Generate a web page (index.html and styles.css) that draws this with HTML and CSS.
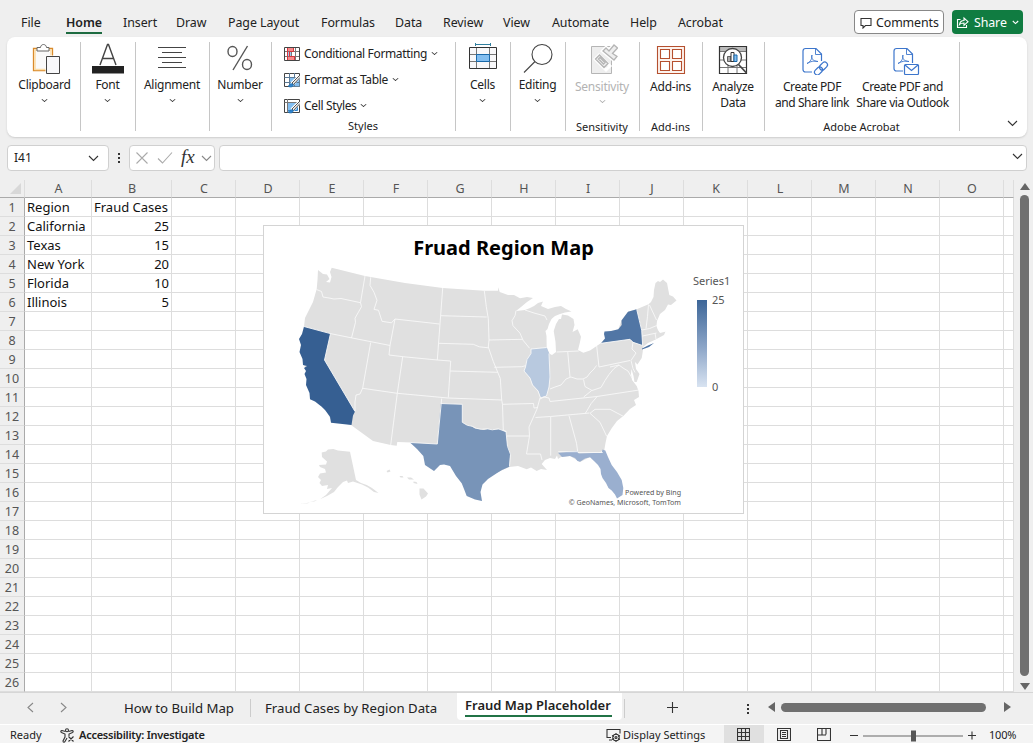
FILE: index.html
```html
<!DOCTYPE html>
<html lang="en">
<head>
<meta charset="utf-8">
<title>Fraud Map Placeholder</title>
<link rel="stylesheet" href="styles.css">
</head>
<body>
<div class="app">
  <header class="menubar">
    <nav class="tabs">
      <span>File</span><span><b class="tab-active">Home</b></span><span>Insert</span><span>Draw</span><span>Page Layout</span><span>Formulas</span><span>Data</span><span>Review</span><span>View</span><span>Automate</span><span>Help</span><span>Acrobat</span>
    </nav>
    <div class="comments">
      <svg width="12" height="12" viewBox="0 0 12 12" class="ln"><path d="M1 1.500h10v7H5.500L3 11V8.500H1z"/></svg>
      <span>Comments</span>
    </div>
    <div class="share">
      <svg width="13" height="13" viewBox="0 0 13 13" class="ln"><path d="M4.500 3.500H1.500v8h9V9M3.500 8.500c.5-3 2-4 4.500-4V2l4 3.700-4 3.600V7C6 7 4.500 7.300 3.500 8.500z"/></svg>
      <span>Share</span>
      <svg width="7" height="5" viewBox="0 0 7 5" class="ln"><path d="M.8 1l2.700 2.600L6.200 1"/></svg>
    </div>
  </header>

  <section class="ribbon">
    <div class="group w74 first">
      <svg class="icon" width="32" height="32" viewBox="0 0 32 32"><path d="M4.500 5.500h19v22h-19z" fill="#fff" stroke="#d98a2b" stroke-width="1.300"/><path d="M6 7h16v19.500H6z" fill="#fafafa" stroke="#fbdca6" stroke-width="1.500"/><path d="M8 8V4.500h3.500c.3-4 5.700-4 6 0H20V8z" fill="#fff" stroke="#666"/><path d="M16.500 12.500H31v18H16.500z" fill="#fff"/><path d="M17.500 13.500h13v17h-13z" fill="#f8f8fa" stroke="#444"/></svg>
      <span class="label">Clipboard</span><i class="chev"></i>
    </div>
    <div class="group w55">
      <svg class="icon" width="32" height="32" viewBox="0 0 32 32"><path d="M8 22L15.500 1.500h1L24 22M10.700 15.500h10.600" fill="none" stroke="#444" stroke-width="1.400"/><path d="M0 23h32v7.500H0z" fill="#222"/></svg>
      <span class="label">Font</span><i class="chev"></i>
    </div>
    <div class="group w74">
      <svg class="icon" width="32" height="32" viewBox="0 0 32 32"><path d="M2 4.500h28M6 9.500h20M2 14.500h28M6 19.500h20M2 24.500h28" stroke="#444"/></svg>
      <span class="label">Alignment</span><i class="chev"></i>
    </div>
    <div class="group w62">
      <svg class="icon" width="32" height="32" viewBox="0 0 32 32" fill="none" stroke="#555" stroke-width="1.400"><ellipse cx="8.500" cy="8.500" rx="4.500" ry="5"/><ellipse cx="23" cy="21.500" rx="4.500" ry="5"/><path d="M23.500 3L9 27"/></svg>
      <span class="label">Number</span><i class="chev"></i>
    </div>
    <div class="group w184 styles">
      <div class="cmds">
        <div class="cmd"><svg width="16" height="16" viewBox="0 0 16 16"><path d="M.5 1.500h15v13H.5z" fill="#fff"/><path d="M3 1.500h7v4H3zM3 10.500h8v4H3z" fill="#f58b8b"/><path d="M3 6h4v4H3z" fill="#9ec8f0"/><path d="M.5 5.500h15M.5 10.500h15M3.500 1v13.500M11.500 1v13.500M7.500 6v4" stroke="#777"/><path d="M3.500 1.500h6v4h-4v5h5v4h-7z" fill="none" stroke="#d9363e"/><path d="M.5 1.500h15v13H.5z" fill="none" stroke="#444"/></svg><span>Conditional Formatting</span><i class="chev"></i></div>
        <div class="cmd"><svg width="16" height="16" viewBox="0 0 16 16"><path d="M.5 1.500h15v13H.5z" fill="#fff" stroke="#444"/><path d="M5.500 5.500h10v9h-10z" fill="#83bef0"/><path d="M.5 5.500h15M.5 10.500h15M5.500 1v13.500M10.500 1v13.500" stroke="#5b7a96"/><path d="M15.500 4.500L8 12" stroke="#fff" stroke-width="4"/><path d="M15.500 3.500L8 11l1.500 1.500 6.500-7" fill="#eee" stroke="#444" stroke-width=".9"/><path d="M9 12c-3-1-3 2-5 2 2 2 6 1 5-2z" fill="#3185d0" stroke="#1969aa" stroke-width=".6"/></svg><span>Format as Table</span><i class="chev"></i></div>
        <div class="cmd"><svg width="16" height="16" viewBox="0 0 16 16"><path d="M.5 1.500h15v13H.5z" fill="#fff" stroke="#444"/><path d="M3.500 4.500h10v8h-10z" fill="#83bef0" stroke="#3185d0"/><path d="M.5 4.500h15M3.500 1v13.500" stroke="#777"/><path d="M15.500 4.500L8 12" stroke="#fff" stroke-width="4"/><path d="M15.500 3.500L8 11l1.500 1.500 6.500-7" fill="#eee" stroke="#444" stroke-width=".9"/><path d="M9 12c-3-1-3 2-5 2 2 2 6 1 5-2z" fill="#3185d0" stroke="#1969aa" stroke-width=".6"/></svg><span>Cell Styles</span><i class="chev"></i></div>
      </div>
      <span class="caption">Styles</span>
    </div>
    <div class="group w55">
      <svg class="icon" width="32" height="32" viewBox="0 0 32 32"><path d="M8.500 1.500h15M8.500 0v3M23.500 0v3" stroke="#2f7f9f"/><path d="M2.500 4.500h27v21h-27z" fill="#f8f8fa"/><path d="M9.500 11.500h13v7h-13z" fill="#83bef0"/><path d="M2.500 11.500h27M2.500 18.500h27M9.500 4.500v21M22.500 4.500v21" stroke="#777"/><path d="M9.500 11.500h13v7h-13z" fill="none" stroke="#1969aa"/><path d="M2.500 4.500h27v21h-27z" fill="none" stroke="#333"/></svg>
      <span class="label">Cells</span><i class="chev"></i>
    </div>
    <div class="group w55">
      <svg class="icon" width="32" height="32" viewBox="0 0 32 32" fill="none" stroke="#444" stroke-width="1.100"><circle cx="20" cy="11.500" r="10"/><path d="M13 18.500L2 29.500"/></svg>
      <span class="label">Editing</span><i class="chev"></i>
    </div>
    <div class="group w74 low muted">
      <svg class="icon" width="32" height="32" viewBox="0 0 32 32" fill="#eee" stroke="#b5b5b5"><path d="M5.500 3.500h20v27h-20z"/><path d="M9 16l4-4 11 11-4 4z" stroke="#fff" stroke-width="3"/><path d="M9.500 16l4-4 8.500 8.500-4 4zM12.500 16l1.500-1.500 5 5-1.500 1.500z" stroke-width="1.300"/><path d="M17 8l3-3 3 3 5-6 3.500 3-5 5.500 4.500 3-3 3.500z" stroke="#fff" stroke-width="4"/><path d="M17 8l3-3 3 3 5-6 3.500 3-5 5.500 4.500 3-3 3.500z" stroke-width="1.300"/></svg>
      <span class="label">Sensitivity</span><i class="chev"></i>
      <span class="caption">Sensitivity</span>
    </div>
    <div class="group w63 low">
      <svg class="icon" width="32" height="32" viewBox="0 0 32 32" fill="none" stroke="#b5502f" stroke-width="1.100"><path d="M2.500 3.500h27v27h-27z" fill="#fdf3ee"/><path d="M5.500 6.500h9v9h-9zM17.500 6.500h9v9h-9zM5.500 18.500h9v9h-9zM17.500 18.500h9v9h-9z" fill="#fff"/></svg>
      <span class="label">Add-ins</span>
      <span class="caption">Add-ins</span>
    </div>
    <div class="group w62 low">
      <svg class="icon" width="32" height="32" viewBox="0 0 32 32"><path d="M2.500 3.500h27v27h-27z" fill="#fff"/><path d="M3 4h26v4H3z" fill="#bbb"/><path d="M2.500 8.500h27M2.500 17h27M2.500 24.500h27M11 20v10M20 20v10" stroke="#777"/><path d="M2.500 3.500h27v27h-27z" fill="none" stroke="#333" stroke-width="1.200"/><circle cx="15.500" cy="14.500" r="9" fill="#fff" stroke="#444" stroke-width="1.300"/><path d="M21.500 21.500l8 8.500" stroke="#444" stroke-width="1.800"/><path d="M10.500 13.500h3.500v5h-3.500z" fill="#aaa" stroke="#444" stroke-width=".8"/><path d="M14 9.500h3v9h-3z" fill="#fff" stroke="#333"/><path d="M17 12h3v6.500h-3z" fill="#83bef0" stroke="#1969aa"/></svg>
      <span class="label">Analyze<br>Data</span>
    </div>
    <div class="group w195 low">
      <div class="pair">
        <div class="item">
          <svg class="icon" width="32" height="32" viewBox="0 0 32 32" fill="none" stroke="#3d76cc" stroke-width="1.200"><path d="M14 29H7.500C6 29 5 28 5 26.500V8c0-1.500 1-2.500 2.500-2.500H18L23.500 11v7"/><path d="M17.500 6v5.500h6M9 20.500c4-2 5-5 5-8.500-1.500 2 1 7 6 6.500-3-1-7-.5-11 2z" stroke-width=".9"/><g transform="rotate(-45 23 25.500)"><rect x="15" y="22.700" width="9" height="5.600" rx="2.800"/><rect x="22" y="22.700" width="9" height="5.600" rx="2.800"/></g></svg>
          <span class="label">Create PDF<br>and Share link</span>
        </div>
        <div class="item">
          <svg class="icon" width="32" height="32" viewBox="0 0 32 32" fill="none" stroke="#3d76cc" stroke-width="1.200"><path d="M14 28H7.500C6 28 5 27 5 25.500V8c0-1.500 1-2.500 2.500-2.500H18L23.500 11v9"/><path d="M17.500 6v5.500h6M9 20.500c4-2 5-5 5-8.500-1.500 2 1 7 6 6.500-3-1-7-.5-11 2z" stroke-width=".9"/><rect x="15.500" y="21.500" width="14" height="10" rx="1" fill="#fff"/><path d="M16 22l6.500 5.500L29 22"/></svg>
          <span class="label">Create PDF and<br>Share via Outlook</span>
        </div>
      </div>
      <span class="caption">Adobe Acrobat</span>
    </div>
    <svg class="collapse ln" width="11" height="7" viewBox="0 0 11 7"><path d="M1 1l4.500 4.500L10 1"/></svg>
  </section>

  <section class="formula">
    <div class="box namebox"><span>I41</span><svg width="11" height="7" viewBox="0 0 11 7" class="ln"><path d="M1 1l4.500 4.500L10 1"/></svg></div>
    <div class="dots"><i></i><i></i><i></i></div>
    <div class="box fx">
      <svg width="14" height="14" viewBox="0 0 14 14" class="ln pale"><path d="M1.500 1.500l11 11M12.500 1.500l-11 11"/></svg>
      <svg width="16" height="14" viewBox="0 0 16 14" class="ln pale"><path d="M1 7.500l4.500 4.500L15 1.500"/></svg>
      <em>fx</em>
      <svg width="11" height="7" viewBox="0 0 11 7" class="ln grey"><path d="M1 1l4.500 4.500L10 1"/></svg>
    </div>
    <div class="box input"><svg width="11" height="7" viewBox="0 0 11 7" class="ln"><path d="M1 1l4.500 4.500L10 1"/></svg></div>
  </section>

  <main class="work">
    <div class="sheet">
      <table class="grid">
        <colgroup><col class="c-head"><col class="c-a"><col class="c-b"><col span="13" class="c-n"><col class="c-last"></colgroup>
        <thead><tr id="letters"></tr></thead>
        <tbody id="rows"></tbody>
      </table>
      <figure class="chart">
        <figcaption>Fruad Region Map</figcaption>
        <svg class="map" width="479" height="287" viewBox="264 226 479 287">
          <path class="land" d="M318 270L323 274 327 274.500 329.500 279 326 282 330 282.500 331.500 277 330 272 331.700 267.700 365 276 405 283 442.700 288 484.300 290.700 498 290.700 498.300 287.300 499.700 292 508 295 514 295 520 298.300 527 297 533 298 527 302 521 307 516 311 525 310 530 308 534 306 538 303 543 301.500 541 306 548 309 555 307 561 306 566 309 571.500 311.500 565 312.500 560 314 555 316 551.500 319 549 324 547.500 329 545.500 331 546.500 336 546.700 347 549 353.500 552 355 556 352 555.500 342 553.700 331 556 324 559 319 561 319 562 314.500 568 315.500 573.500 319 574.500 325 572.500 332 577.700 329.300 581 336.700 580 342 578 350 583.300 352.700 590 350.500 596.700 346 601 343 605 338.300 618.300 329.300 621.700 320 628 311.700 636.700 309.300 648.500 304.300 651 302 653.500 297 654 290 655.500 283 658 281 660 282 663 279.500 667 283 669.300 295 673 296.500 676.500 300.500 671 305 668 304.500 665 310 660 314 657 321 656.500 326 657.500 329 660 334 665.500 331.500 664 335 655.700 339.500 648 343 643 347 642.700 352 641.700 358 637.500 364.500 635 362 636 369 639.500 374 636.700 382 634.500 382 633.500 376 631.500 369 631 374 632 380 636.700 386 638.500 391 639 397 634 400 636 405 630 409 623.300 416 617 421 611.700 428.300 607 436 605.500 443 604.300 450 590 457 580 462 570 456 561 457 558 459 557 455.500 555 459 550 458 545 460 541.700 464 547 470 541 469 536.700 471 531 467.500 526.700 469.300 518 466 509.300 467 496 473 450 466 440 460 412 442.500 397.300 442 396.700 445.700 390.700 445 373 441 351 425 331 420 304 365 304 326.500 305 318 313 302 316.700 289 317.500 280z"/>
          <path class="land" d="M321.700 452.500L326 451.500 328 449.500 333.300 449 338 450.500 350 451.700 356 480 361 483 366.700 485 372 488 378.500 493 374 492 368 487.500 362 484.500 353 481.500 348 483 347 480.500 343 482 338 487 334 492 327 496 320 499.300 326 495 332 488 327 489 328 485 322 486 319.500 483 321 480 318 477 320 473.500 326 472.500 325 469 320 467 319 465 326 464.500 327 461.500 322 457zM386.500 471l3-1.500 1 2-3 1zM399.500 476l3 0 1 1.500-3 0zM407 477.500l4 0 3 2-5 0zM413.500 481.500l3 .5 1 2-4-1zM419.500 488.500l4 0 4.500 5-2 3-4.500 3-2-5zM300 504l10-1.500-2 .7zM310 502l7-2-2 1.200z"/>
          <path class="ca" d="M304 326.500L330.500 333.500 324.500 360 355 411.500 353 415.500 351.500 425 331 422.700 330 416.700 325 410 321.700 406.700 315 401.500 310 399.300 309.500 393 306 385 306.500 379 304.500 374 306 371 304 368 307 366 303 365 302.500 359 299.500 352 301 345 299 339 302 334z"/>
          <path class="tx" d="M440.700 403.500L462.300 404.300V422.300L466.700 425 471 426 475 428.500 480 429.300 484 430 488 429 493.300 429.700 500 429.300 506 431.700 507.300 445 510.300 453.300 509.300 466.700 502 470 496.700 473.300 488 479 482.500 484.500 480.500 492 482 501 475 499.500 466.700 496 464 489 461.700 483.300 456 476 450 466 444 464.500 440 465 434 471 425 465 423.300 456 417 449 410 442.500 437.300 444z"/>
          <path class="il" d="M531 349L546.700 347.500 549.300 353.500 550.300 376.700 549 386.700 546.700 396 540.700 397.500 538.300 390.700 532.700 385 530 378 524 371 525.500 367 526.700 359.500 531 353.500z"/>
          <path class="fl" d="M558 452.700L577.700 451 578.700 453.500 601.700 452.700 602.500 449.500 605.300 450.500 608 457 611.700 465 617 472 621.700 480 623.300 488 622.500 495 617 498.500 615 494.500 611.700 490.500 608.500 488 606 483 602.500 478 601 474 600.500 469 598 465 594 461 590 457.300 585 458.500 580 461.700 577.500 461 575 458 570 456 562 457z"/>
          <path class="ny" d="M601 343.300L605 338.500 604 334 604.500 331.500 611 331 618.300 329.300 621.700 325 621.500 320.500 628 311.700 636.700 309.300 639.300 320 641.700 330 642.500 345.500 633.300 342.300 630 339.300zM642 348.500l6-3 6-2.500-5 4-7 2.500z"/>
          <path class="land" d="M656 328l4 5 4-1-1 3-6-1z"/>
          <g class="borders">
            <path d="M316.500 289.500l5 2 1.500 5.500 6 1 5 1 7-.5 19.500 4.200 1 4-6.500 11.500.5 4-4 15.800M360.500 302.700L365 276M304 326.500l26 7 21.700 4.400 38.500 7.600M370.700 277.300l-.7 8 4 7 3 8-3 9 4.500 1 3.500 11 9.500 1.500 3.500-3.800 44.500 5M395 319l-5 26.500-1 9.500 14 1.700 34.300 3.300 13.200 1M442.700 288l-5.400 72M330.500 333.500l-6 26.500 30.500 51.500M370.700 342.500l-8 45.500-2.700 6-4 1-1 7v9M402.700 356.700l-5.400 36.600-6.600 51.700M362.700 388.300l34.600 5L448 398l53.700 2M441.700 398.500l-4.400 45.500-27-1.500M440.700 403.500l21.600.8v18l5 3 5 1 4 2 5 1 6-.5 5 1 6-1 8 3M441 315.700l45.700 1.300M439 343.300l34.300 1 6 2.500 9 1M484.300 290.700l2 16 2 12 .7 21.300-.7 7 5 14.500 7 17 1.400 21.500.8 4.300.8 26 2.700 1 1.500 15 3 8-1 12M489 340l33.700-.7M450.700 361l-2.400 36.500M450 371l47.700 1.300M494.300 367.300l27.400-.6 4-1M502.500 404.300l31-.8.5 4.500 4-.5M507 436h22M516 310.700l-1 5-3 5 1 5 7 7.500 3 7 6.500 8M525 310l9 3 11 3 2 4M531 349l15.700-1.500M531 349v4.500l-4 6-1.500 7.500-1.500 4 6 7 2.500 7 5.500 6 2.500 7 6-2 2.500-9 1-10-1-23.500M540 398l-3 11-4 9-4 9 .5 9-3 18h14l1.500 6M556.700 352l11-.5 11-.5M567.700 351.500l2.300 25.500M550 389l5-2 6-2 5-6 5-2 6 2 6 0 4-2 3-4 4-4 2.500-3.500M596.700 346l2.300 21 31-6.500M601 343.300l29-4 3 3 9 3M633 342l-1 7 4 4-5 7.500 2 8 2 4M583.500 379.500l1.500 7 7 4 9-3 4-7 4-6 5-6 5-3.500 4 3 5 3 4 7M610 367l9-2M591.700 390.500l-8 6.500M540 399l4-2 5 1 1 3.500 47-5L639 390M535.500 417.500l15-1 39-3.500M550.700 416.700v39M569 415.700l7.500 27.500 1.200 8.500h-19.500M577.700 452.500h25M597 396.700l-6 7-4 7-2 3M590 413.300l10 9 6.700 14M590 413.300l5-4 15 0 13.300 7M636.700 309.300l2.600 11 2.400 10 1 16M648.500 304.500l-1 12-1.500 12M649.500 305l7 15M641.700 330l8-1.500 7-3M642.500 336l14-3M655 333l1 6"/>
          </g>
        </svg>
        <div class="legend">
          <span class="series">Series1</span>
          <div class="scale"><div class="ramp"></div><div class="ticks"><span>25</span><span>0</span></div></div>
        </div>
        <div class="credit">Powered by Bing<br>© GeoNames, Microsoft, TomTom</div>
      </figure>
    </div>
    <div class="vscroll"><i class="up"></i><b></b><i class="down"></i></div>
  </main>

  <footer class="sheets">
    <svg class="nav ln grey" width="7" height="11" viewBox="0 0 7 11"><path d="M6 1L1 5.500 6 10"/></svg>
    <svg class="nav2 ln grey" width="7" height="11" viewBox="0 0 7 11"><path d="M1 1l5 4.500L1 10"/></svg>
    <span class="tab t1">How to Build Map</span>
    <span class="tab t2">Fraud Cases by Region Data</span>
    <span class="tab-on"><b>Fraud Map Placeholder</b></span>
    <i class="vline"></i>
    <svg class="plus ln" width="11" height="11" viewBox="0 0 11 11"><path d="M5.500 0v11M0 5.500h11"/></svg>
    <div class="dots"><i></i><i></i><i></i></div>
    <div class="hscroll"><i class="left"></i><b></b><i class="right"></i></div>
  </footer>

  <div class="status">
    <span class="ready">Ready</span>
    <svg width="15" height="15" viewBox="0 0 15 15" class="ln"><circle cx="7" cy="2.300" r="1.500"/><path d="M5.500 3.500L2 2.500c-1.500 0-1.500 1.500-.5 2L5 6v3l-2 4c0 1.500 1.500 1.500 2 .5L7 10M8.500 3.500L12 2.500c1.500 0 1.500 1.500.5 2L9 6v2M8.500 8.500l5 5M13.500 8.500l-5 5"/></svg>
    <b class="access">Accessibility: Investigate</b>
    <svg class="disp ln" width="15" height="14" viewBox="0 0 15 14"><path d="M5 9.500H1v-8h13v4M3 12h3"/><circle cx="10" cy="9.500" r="3.200"/><circle cx="10" cy="9.500" r="1"/><path d="M10 5v2M10 12v2M6 7.500l2 1M12 10.500l2 1M14 7.500l-2 1M8 10.500l-2 1"/></svg>
    <span class="display">Display Settings</span>
    <div class="view on"><svg width="13" height="13" viewBox="0 0 13 13" class="ln"><path d="M.5.500h12v12H.500zM.5 4.500h12M.5 8.500h12M4.500.500v12M8.500.500v12"/></svg></div>
    <div class="view"><svg width="14" height="13" viewBox="0 0 14 13" class="ln"><path d="M.5.500h13v12H.500zM3.500 2.500h7v8h-7zM5 4.500h4M5 6.500h4M5 8.500h4"/></svg></div>
    <div class="view"><svg width="14" height="13" viewBox="0 0 14 13" class="ln"><path d="M.5.500h13v12H.500zM5 .5v6M9 .5v6M.5 7h8.500"/></svg></div>
    <svg class="zoom ln" width="126" height="13" viewBox="0 0 126 13"><path d="M0 6.500h8M118 6.500h8M122 2.500v8"/><path d="M13 7h100" stroke="#666"/><path d="M61 1.500h5v11h-5z" fill="#555" stroke="none"/></svg>
    <span class="pct">100%</span>
  </div>
</div>
<script src="grid.js"></script>
</body>
</html>
```
FILE: styles.css
```css
* { box-sizing: border-box; }
body { margin: 0; background: #efefef; color: #222; font: 12px/16px "Noto Sans", sans-serif; }
.app { width: 1033px; height: 743px; display: flex; flex-direction: column; overflow: hidden; }
i, em { font-style: normal; }
svg { display: block; flex: none; }
.ln { fill: none; stroke: #333; stroke-width: 1.1; }
.pale { stroke: #aaa; }
.grey { stroke: #888; }

.menubar { height: 37px; display: flex; align-items: flex-start; flex: none; padding-top: 10px; }
.tabs { width: 854px; padding: 5px 0 0 21px; display: grid; grid-template-columns: 45px 57px 53px 52px 93px 74px 48px 60px 49px 78px 48px 1fr; font-size: 12.4px; letter-spacing: -.05px; white-space: nowrap; }
.tab-active { display: inline-block; font-weight: 600; height: 19px; border-bottom: 2px solid #1d6b40; }
.comments, .share { height: 24px; display: flex; align-items: center; border-radius: 4px; font-size: 12.4px; letter-spacing: -.1px; }
.comments { width: 90px; padding: 1px 0 0 5px; gap: 4px; background: #fff; border: 1px solid #888; }
.share { width: 71px; margin-left: 8px; padding: 1px 0 0 4px; gap: 5px; background: #107c41; color: #fff; }
.share .ln { stroke: #fff; }

.ribbon { height: 100px; margin: 0 6px 0 7px; display: flex; flex: none; background: #fff; border-radius: 8px; padding: 5px 0 6px; box-shadow: 0 1px 2px #ccc; }
.group { height: 89px; display: flex; flex-direction: column; align-items: center; border-right: 1px solid #c6c6c6; padding-right: 1px; }
.first { padding: 0 0 0 2px; }
.w55 { width: 55px; } .w62 { width: 62px; } .w63 { width: 63px; } .w74 { width: 74px; } .w184 { width: 184px; } .w195 { width: 195px; }
.icon { margin-top: 1px; }
.label { margin-top: 2px; text-align: center; white-space: nowrap; letter-spacing: -.25px; }
.low .label { margin-top: 4px; }
.chev { width: 5px; height: 5px; border: solid #333; border-width: 0 1.2px 1.2px 0; transform: scaleY(.8) rotate(45deg) scale(.85); margin-top: 3px; flex: none; }
.group > .chev { margin-top: 4px; }
.low > .chev { margin-top: 3px; }
.caption { margin-top: auto; font-size: 11px; line-height: 12px; margin-bottom: -2px; }
.muted .label { color: #b3b3b3; }
.muted .chev { border-color: #aaa; }
.styles { align-items: stretch; }
.styles .caption { align-self: center; margin-bottom: -1px; }
.cmds { height: 76px; padding: 2px 0 0 12px; display: grid; grid-auto-rows: 26px; }
.cmd { height: 20px; display: flex; align-items: center; gap: 4px; white-space: nowrap; letter-spacing: -.35px; }
.cmd .chev { margin: -3px 0 0 1px; }
.pair { align-self: flex-start; display: grid; grid-template-columns: 94px 87px; }
.item { display: flex; flex-direction: column; align-items: center; }
.item .icon { margin-left: 4px; }
.item .label { letter-spacing: -.42px; }
.collapse { margin: 78px 0 0 47px; }

.formula { height: 43px; padding: 8px 6px 0 7px; display: flex; flex: none; align-items: flex-start; }
.box { height: 26px; display: flex; align-items: center; background: #fff; border: 1px solid #d0d0d0; border-radius: 4px; }
.namebox { width: 102px; justify-content: space-between; padding: 0 9px 0 6px; }
.dots { display: grid; gap: 2px; }
.dots i { width: 2px; height: 2px; background: #333; }
.formula .dots { margin: 8px 9px 0 9px; }
.fx { width: 86px; padding-left: 5px; gap: 8px; }
.fx em { font: italic 400 19px/20px "Liberation Serif", serif; color: #333; width: 14px; margin-top: -3px; }
.fx .grey { margin-left: -2px; }
.input { flex: 1; margin-left: 4px; justify-content: flex-end; padding-right: 3px; }
.input svg { margin-top: -4px; }

.work { height: 512px; display: flex; flex: none; }
.sheet { width: 1014px; position: relative; }
.grid { width: 1014px; table-layout: fixed; border-collapse: separate; border-spacing: 0; }
.c-head { width: 25px; } .c-a { width: 67px; } .c-b { width: 80px; } .c-n { width: 64px; } .c-last { width: 10px; }
.grid th, .grid td { padding: 0; height: 19px; font-size: 13px; line-height: 16px; white-space: nowrap; }
.grid th { background: #efefef; color: #555; font: 400 12.5px/16px "Noto Sans", sans-serif; }
.grid thead th { height: 18px; border-bottom: 1px solid #aaa; border-right: 1px solid #ddd; padding-left: 1px; }
.grid tbody th { border-right: 1px solid #aaa; border-bottom: 1px solid #ddd; padding-top: 1px; line-height: 15px; }
.grid td { background: #fff; color: #111; border-right: 1px solid #ddd; border-bottom: 1px solid #ddd; padding: 0 2px; }
.grid td.num { text-align: right; }
.corner::after { content: ""; display: block; margin-left: 9px; width: 11px; height: 11px; background: #d8d8d8; clip-path: polygon(100% 0, 100% 100%, 0 100%); }

.chart { position: absolute; left: 263px; top: 45px; width: 481px; height: 289px; margin: 0; background: #fff; border: 1px solid #d4d4d4; }
.chart figcaption { position: absolute; inset: 11px 0 auto 0; text-align: center; font: 700 20px/22px "Noto Sans", sans-serif; color: #000; }
.land { fill: #e0e0e0; } .ca { fill: #365f92; } .tx { fill: #7894b8; } .il { fill: #b8c9df; } .fl { fill: #9aafcf; } .ny { fill: #5176a5; }
.borders { fill: none; stroke: #f8f8f8; stroke-width: .9; stroke-linejoin: round; }
.legend { position: absolute; left: 429px; top: 47px; font-size: 11px; color: #555; }
.scale { display: flex; gap: 5px; margin: 11px 0 0 4px; }
.ramp { width: 10px; height: 87px; background: linear-gradient(#3d6698, #8da6c8 55%, #d8e3f1); }
.ticks { display: flex; flex-direction: column; justify-content: space-between; margin: -8px 0; }
.credit { position: absolute; right: 62px; top: 261px; text-align: right; font-size: 7.1px; line-height: 10px; color: #555; }

.vscroll { width: 19px; display: flex; flex-direction: column; align-items: center; padding: 3px 0 0 2px; }
.vscroll b { width: 9px; height: 481px; border-radius: 5px; background: #707070; margin: 5px 0 7px; }
.up, .down { border: 5px solid transparent; }
.up { border-top: 0; border-bottom: 7px solid #666; }
.down { border-bottom: 0; border-top: 7px solid #666; }

.sheets { height: 33px; display: flex; flex: none; align-items: flex-start; border-top: 1px solid #d6d6d6; border-bottom: 1px solid #fff; font-size: 13.2px; white-space: nowrap; }
.nav { margin: 9px 0 0 27px; }
.nav2 { margin: 9px 0 0 26px; }
.tab { margin-top: 6px; line-height: 18px; }
.t1 { width: 127px; margin-left: 57px; border-right: 1px solid #ccc; }
.t2 { width: 192px; padding-left: 14px; }
.tab-on { width: 165px; height: 27px; margin-left: 14px; padding: 3px 8px 0; background: #fff; border-radius: 0 0 4px 4px; line-height: 18px; font-size: 13px; }
.tab-on b { display: block; width: 147px; font-weight: 600; border-bottom: 2px solid #217346; height: 21px; }
.vline { width: 1px; height: 19px; margin: 6px 0 0 2px; background: #ccc; }
.plus { margin: 9px 0 0 42px; }
.sheets .dots { margin: 11px 0 0 69px; }
.hscroll { display: flex; align-items: center; margin: 9px 0 0 19px; }
.hscroll b { width: 205px; height: 9px; border-radius: 5px; background: #707070; margin: 0 18px 0 6px; }
.left, .right { border: 5px solid transparent; }
.left { border-left: 0; border-right: 7px solid #666; }
.right { border-right: 0; border-left: 7px solid #666; }

.status { height: 18px; display: flex; align-items: center; flex: none; background: #f4f4f4; padding-top: 2px; font-size: 11px; white-space: nowrap; }
.ready { width: 50px; margin-left: 10px; }
.access { margin-left: 4px; width: 527px; font-weight: 600; letter-spacing: -.25px; }
.display { margin-left: 2px; width: 101px; }
.view { width: 40px; height: 18px; margin-top: -2px; display: flex; align-items: center; justify-content: center; }
.view svg { margin-left: -1px; }
.on { background: #e0e0e0; }
.zoom { margin-left: 6px; }
.pct { margin-left: 13px; letter-spacing: -.2px; }
```
FILE: grid.js
```js
const data = [
  ["Region", "Fraud Cases"],
  ["California", 25],
  ["Texas", 15],
  ["New York", 20],
  ["Florida", 10],
  ["Illinois", 5]
];
const letters = "ABCDEFGHIJKLMNO".split("");
document.getElementById("letters").innerHTML =
  '<th class="corner"></th>' + letters.map(l => `<th>${l}</th>`).join("") + "<th></th>";
let html = "";
for (let r = 0; r < 26; r++) {
  html += `<tr><th>${r + 1}</th>`;
  for (let c = 0; c < 16; c++) {
    const v = data[r] && data[r][c] !== undefined ? data[r][c] : "";
    html += `<td${typeof v === "number" ? ' class="num"' : ""}>${v}</td>`;
  }
  html += "</tr>";
}
document.getElementById("rows").innerHTML = html;
```
